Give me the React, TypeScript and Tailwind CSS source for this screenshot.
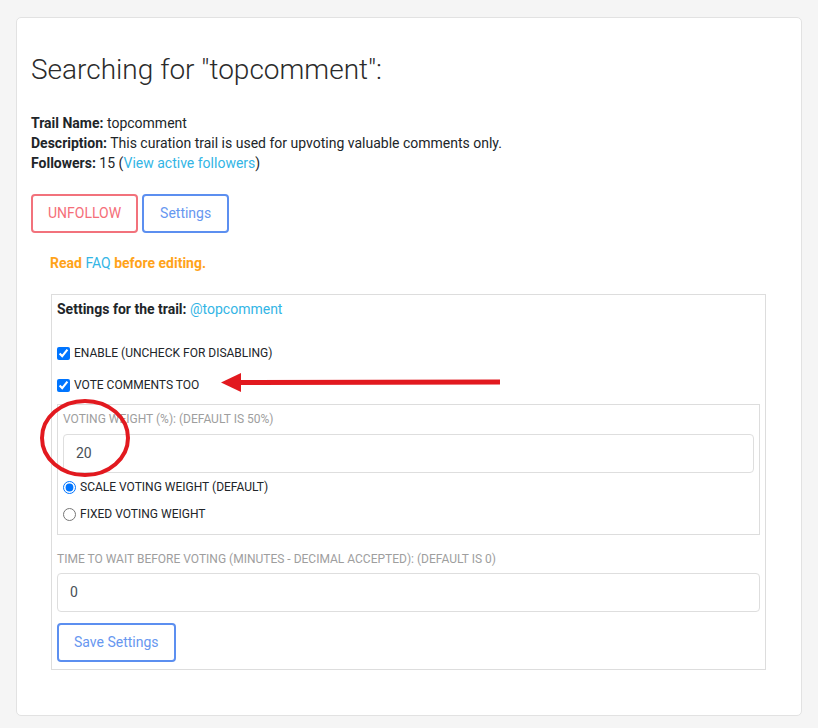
import React from 'react';

const App = () => {
  return (
    <div className="relative min-h-[728px] bg-[#f5f5f5] px-4 pt-[17px] font-[family-name:Roboto,sans-serif] text-[#212529]">
      <div className="h-[699px] rounded-[5px] border border-[#e2e2e2] bg-white px-[14px] pt-[35px]">
        {/* Header */}
        <h3 className="text-[28px] leading-[34px] font-light text-[#2b2b2b]">Searching for "topcomment":</h3>

        {/* Trail info */}
        <div className="mt-[26px] text-[14px] leading-[20px]">
          <div>
            <b className="font-bold">Trail Name:</b> topcomment
          </div>
          <div>
            <b className="font-bold">Description:</b> This curation trail is used for upvoting valuable comments only.
          </div>
          <div>
            <b className="font-bold">Followers:</b> 15 (<span className="text-[#33b5e5]">View active followers</span>)
          </div>
        </div>

        <div className="mt-[21px] flex gap-[4px]">
          <button className="h-[39px] rounded-[4px] border-2 border-[#f2727c] px-[15px] text-[14px] text-[#f56e79]">
            UNFOLLOW
          </button>
          <button className="h-[39px] w-[87px] rounded-[4px] border-2 border-[#5c8ff0] text-[14px] text-[#6797f0]">
            Settings
          </button>
        </div>

        <p className="mt-[20px] ml-[19px] text-[14px] leading-[20px] font-bold text-[#ffa31a]">
          Read <span className="font-normal text-[#33b5e5]">FAQ</span> before editing.
        </p>

        {/* Settings box */}
        <div className="mt-[21px] ml-[20px] h-[376px] w-[715px] border border-[#dddddd] px-[5px] pt-[4px]">
          <div className="text-[14px] leading-[20px]">
            <b className="font-bold">Settings for the trail:</b> <span className="text-[#33b5e5]">@topcomment</span>
          </div>

          <label className="mt-[25px] flex h-[18px] items-center gap-[4px] text-[12px] leading-[18px]">
            <input type="checkbox" defaultChecked className="h-[13px] w-[13px]" />
            ENABLE (UNCHECK FOR DISABLING)
          </label>
          <label className="mt-[14px] flex h-[18px] items-center gap-[4px] text-[12px] leading-[18px]">
            <input type="checkbox" defaultChecked className="h-[13px] w-[13px]" />
            VOTE COMMENTS TOO
          </label>

          <div className="mt-[10px] border border-[#dddddd] px-[5px] pt-[5px] pb-[11px]">
            <div className="text-[12px] leading-[18px] text-[#9e9e9e]">VOTING WEIGHT (%): (DEFAULT IS 50%)</div>
            <div className="mt-[6px] flex h-[39px] items-center rounded-[4px] border border-[#dedede] px-[12px] text-[14px] text-[#495057]">
              20
            </div>
            <label className="mt-[5px] flex h-[18px] items-center gap-[4px] text-[12px] leading-[18px]">
              <input type="radio" name="weight" defaultChecked className="h-[13px] w-[13px]" />
              SCALE VOTING WEIGHT (DEFAULT)
            </label>
            <label className="mt-[9px] flex h-[18px] items-center gap-[4px] text-[12px] leading-[18px]">
              <input type="radio" name="weight" className="h-[13px] w-[13px]" />
              FIXED VOTING WEIGHT
            </label>
          </div>

          <div className="mt-[15px] text-[12px] leading-[18px] text-[#9e9e9e]">
            TIME TO WAIT BEFORE VOTING (MINUTES - DECIMAL ACCEPTED): (DEFAULT IS 0)
          </div>
          <div className="mt-[5px] flex h-[39px] items-center rounded-[4px] border border-[#dedede] px-[12px] text-[14px] text-[#495057]">
            0
          </div>

          <button className="mt-[11px] h-[39px] rounded-[4px] border-2 border-[#5c8ff0] px-[15px] text-[14px] text-[#6797f0]">
            Save Settings
          </button>
        </div>
      </div>

      {/* Annotation overlay: arrow and circle */}
      <svg className="pointer-events-none absolute top-0 left-0" width="818" height="728" viewBox="0 0 818 728">
        <line x1="500" y1="382" x2="238" y2="382.5" stroke="#e2191f" strokeWidth="5" />
        <polygon points="221,382.5 241,373 241,392" fill="#e2191f" />
        <ellipse cx="85" cy="438" rx="43" ry="37" fill="none" stroke="#e2191f" strokeWidth="4" />
      </svg>
    </div>
  );
};

export default App;
